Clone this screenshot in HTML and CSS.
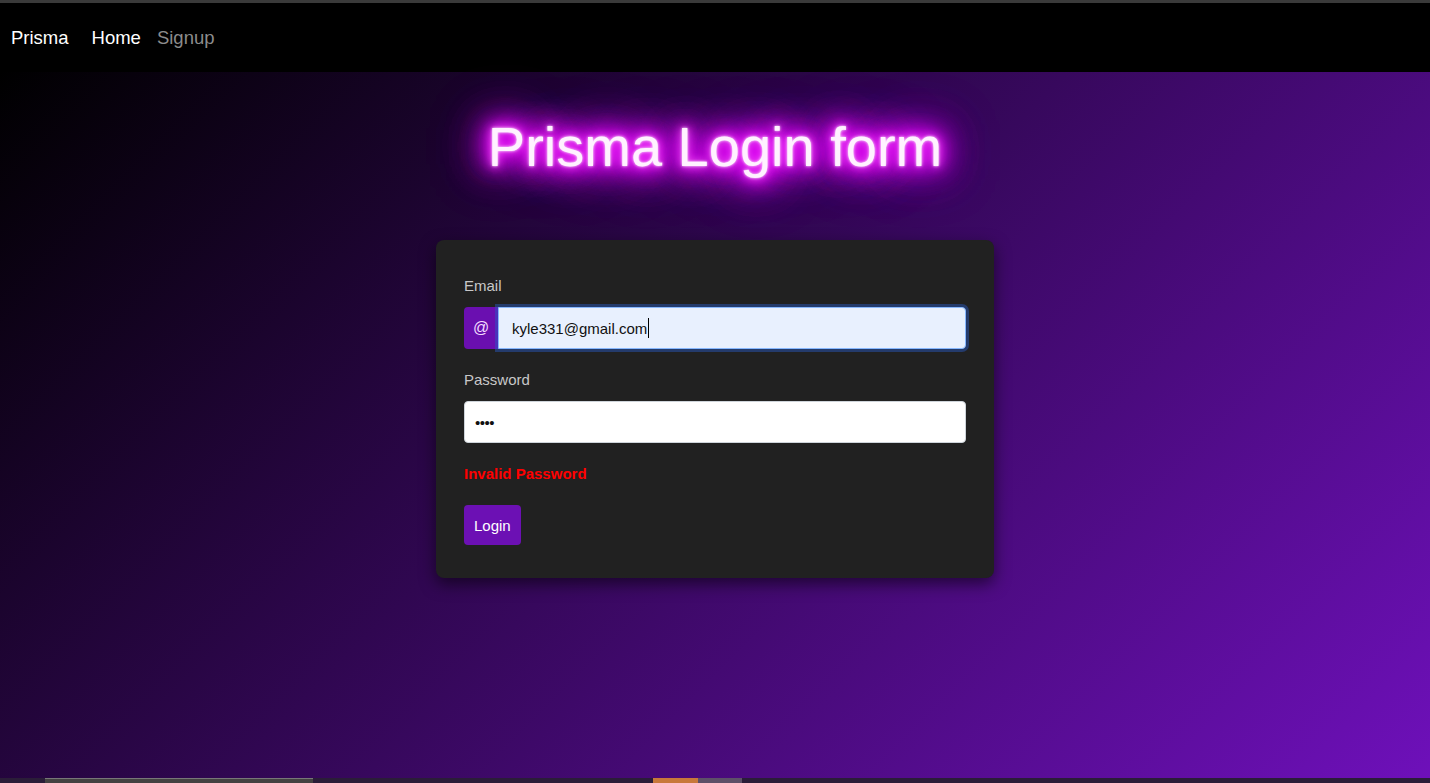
FILE: index.html
```html
<!DOCTYPE html>
<html lang="en">
<head>
<meta charset="utf-8">
<title>Prisma Login form</title>
<link rel="stylesheet" href="styles.css">
</head>
<body>
<div class="topline"></div>
<nav class="navbar">
  <a class="brand" href="#">Prisma</a>
  <a class="nav-link active" href="#">Home</a>
  <a class="nav-link muted" href="#">Signup</a>
</nav>
<main class="main">
  <h1 class="title">Prisma Login form</h1>
  <form class="card">
    <label class="label">Email</label>
    <div class="input-group">
      <span class="addon">@</span>
      <div class="field field-focus"><span>kyle331@gmail.com</span><span class="caret"></span></div>
    </div>
    <label class="label">Password</label>
    <div class="field field-pass"><span class="dots">••••</span></div>
    <p class="error">Invalid Password</p>
    <button type="button" class="btn">Login</button>
  </form>
</main>
<div class="taskbar">
  <span class="tb-window"></span>
  <span class="tb-orange"></span>
  <span class="tb-gray"></span>
</div>
</body>
</html>
```
FILE: styles.css
```css
html, body {
  margin: 0;
  height: 100%;
}
body {
  display: flex;
  flex-direction: column;
  font-family: "Liberation Sans", Arial, sans-serif;
  background: #000;
  overflow: hidden;
}
.topline {
  height: 3px;
  background: #3a3a3a;
  flex: none;
}
.navbar {
  flex: none;
  height: 69px;
  background: #000;
  display: flex;
  align-items: center;
  padding-left: 11px;
}
.navbar a {
  text-decoration: none;
  font-size: 18.5px;
}
.brand {
  color: #fff;
  margin-right: 23px;
}
.nav-link.active {
  color: #fff;
  margin-right: 16px;
}
.nav-link.muted {
  color: #8c8c8c;
}
.main {
  flex: 1;
  background: linear-gradient(135deg, #000000 0%, #6e10ba 100%);
  display: flex;
  flex-direction: column;
  align-items: center;
}
.title {
  margin: 43px 0 61px;
  font-weight: normal;
  font-size: 56px;
  line-height: 64px;
  color: #fff2ff;
  text-shadow:
    0 0 3px #fff,
    0 0 8px #ff70ff,
    0 0 14px #f000ff,
    0 0 22px #e800ff,
    0 0 22px #e800ff,
    0 0 32px #d800f8,
    0 0 32px #d800f8,
    0 0 44px #c000e8,
    0 0 44px #c000e8,
    0 0 60px #a000d8,
    0 0 60px #a000d8;
}
.card {
  width: 558px;
  box-sizing: border-box;
  padding: 35px 28px 33px;
  background: #212121;
  border-radius: 8px;
  box-shadow: 0 6px 16px rgba(0, 0, 0, 0.55);
  display: flex;
  flex-direction: column;
  align-items: stretch;
}
.label {
  display: block;
  font-size: 15px;
  line-height: 22px;
  color: #c8c8c8;
  margin-bottom: 10px;
}
.input-group {
  display: flex;
  height: 42px;
  margin-bottom: 20px;
}
.addon {
  width: 34px;
  flex: none;
  display: flex;
  align-items: center;
  justify-content: center;
  background: #6a0fb0;
  color: #f3dcff;
  font-size: 16px;
  border-radius: 4px 0 0 4px;
}
.field {
  flex: 1;
  display: flex;
  align-items: center;
  box-sizing: border-box;
  font-size: 15px;
  color: #111;
  border-radius: 4px;
}
.field-focus {
  background: #e8f0fe;
  border: 1px solid #86b7fe;
  box-shadow: 0 0 0 3px rgba(40, 90, 200, 0.45);
  border-radius: 0 4px 4px 0;
  padding-left: 13px;
  position: relative;
  z-index: 1;
}
.caret {
  width: 1px;
  height: 20px;
  background: #000;
  margin-left: 1px;
}
.field-pass {
  flex: none;
  height: 42px;
  background: #fff;
  border: 1px solid #ced4da;
  padding-left: 10px;
}
.dots {
  font-size: 15px;
  letter-spacing: -0.5px;
}
.error {
  margin: 20px 0 20px;
  font-size: 15px;
  line-height: 22px;
  font-weight: bold;
  color: #ff0000;
}
.btn {
  align-self: flex-start;
  height: 40px;
  padding: 0 10px;
  border: none;
  border-radius: 4px;
  background: #6c10b4;
  color: #fff;
  font-family: "Liberation Sans", Arial, sans-serif;
  font-size: 15px;
}
.taskbar {
  flex: none;
  height: 5px;
  background: #2a1d38;
  display: flex;
}
.tb-window {
  width: 268px;
  margin-left: 45px;
  background: #444242;
  border-top: 1px solid #777;
  box-sizing: border-box;
}
.tb-orange {
  width: 45px;
  margin-left: 340px;
  background: #c8783a;
}
.tb-gray {
  width: 44px;
  background: #5d5068;
}
```
